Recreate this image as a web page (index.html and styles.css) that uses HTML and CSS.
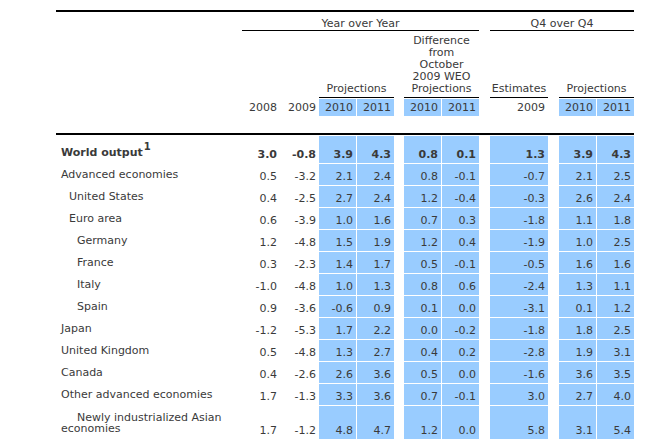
FILE: index.html
```html
<!DOCTYPE html>
<html>
<head>
<meta charset="utf-8">
<title>World Economic Outlook Projections</title>
<link rel="stylesheet" href="styles.css">
</head>
<body>
<div class="table">
  <div class="row h1">
    <div class="hd yoy">Year over Year</div>
    <div class="hd q4">Q4 over Q4</div>
  </div>
  <div class="row h2">
    <div class="hd proj">Projections</div>
    <div class="hd diff">Difference<br>from<br>October<br>2009 WEO<br>Projections</div>
    <div class="hd est">Estimates</div>
    <div class="hd proj2">Projections</div>
  </div>
  <div class="row h3">
    <div></div>
    <div class="y">2008</div>
    <div class="y">2009</div>
    <div class="y b br">2010</div>
    <div class="y b">2011</div>
    <div></div>
    <div class="y b br">2010</div>
    <div class="y b">2011</div>
    <div></div>
    <div class="y">2009</div>
    <div></div>
    <div class="y b br">2010</div>
    <div class="y b">2011</div>
  </div>
  <div class="rule"></div>

  <div class="row d first bold">
    <div class="lbl">World output<sup>1</sup></div>
    <div class="c">3.0</div><div class="c">-0.8</div>
    <div class="c b br">3.9</div><div class="c b">4.3</div><div></div>
    <div class="c b br">0.8</div><div class="c b">0.1</div><div></div>
    <div class="c b">1.3</div><div></div>
    <div class="c b br">3.9</div><div class="c b">4.3</div>
  </div>
  <div class="row d">
    <div class="lbl">Advanced economies</div>
    <div class="c">0.5</div><div class="c">-3.2</div>
    <div class="c b br">2.1</div><div class="c b">2.4</div><div></div>
    <div class="c b br">0.8</div><div class="c b">-0.1</div><div></div>
    <div class="c b">-0.7</div><div></div>
    <div class="c b br">2.1</div><div class="c b">2.5</div>
  </div>
  <div class="row d">
    <div class="lbl i1">United States</div>
    <div class="c">0.4</div><div class="c">-2.5</div>
    <div class="c b br">2.7</div><div class="c b">2.4</div><div></div>
    <div class="c b br">1.2</div><div class="c b">-0.4</div><div></div>
    <div class="c b">-0.3</div><div></div>
    <div class="c b br">2.6</div><div class="c b">2.4</div>
  </div>
  <div class="row d">
    <div class="lbl i1">Euro area</div>
    <div class="c">0.6</div><div class="c">-3.9</div>
    <div class="c b br">1.0</div><div class="c b">1.6</div><div></div>
    <div class="c b br">0.7</div><div class="c b">0.3</div><div></div>
    <div class="c b">-1.8</div><div></div>
    <div class="c b br">1.1</div><div class="c b">1.8</div>
  </div>
  <div class="row d">
    <div class="lbl i2">Germany</div>
    <div class="c">1.2</div><div class="c">-4.8</div>
    <div class="c b br">1.5</div><div class="c b">1.9</div><div></div>
    <div class="c b br">1.2</div><div class="c b">0.4</div><div></div>
    <div class="c b">-1.9</div><div></div>
    <div class="c b br">1.0</div><div class="c b">2.5</div>
  </div>
  <div class="row d">
    <div class="lbl i2">France</div>
    <div class="c">0.3</div><div class="c">-2.3</div>
    <div class="c b br">1.4</div><div class="c b">1.7</div><div></div>
    <div class="c b br">0.5</div><div class="c b">-0.1</div><div></div>
    <div class="c b">-0.5</div><div></div>
    <div class="c b br">1.6</div><div class="c b">1.6</div>
  </div>
  <div class="row d">
    <div class="lbl i2">Italy</div>
    <div class="c">-1.0</div><div class="c">-4.8</div>
    <div class="c b br">1.0</div><div class="c b">1.3</div><div></div>
    <div class="c b br">0.8</div><div class="c b">0.6</div><div></div>
    <div class="c b">-2.4</div><div></div>
    <div class="c b br">1.3</div><div class="c b">1.1</div>
  </div>
  <div class="row d">
    <div class="lbl i2">Spain</div>
    <div class="c">0.9</div><div class="c">-3.6</div>
    <div class="c b br">-0.6</div><div class="c b">0.9</div><div></div>
    <div class="c b br">0.1</div><div class="c b">0.0</div><div></div>
    <div class="c b">-3.1</div><div></div>
    <div class="c b br">0.1</div><div class="c b">1.2</div>
  </div>
  <div class="row d">
    <div class="lbl">Japan</div>
    <div class="c">-1.2</div><div class="c">-5.3</div>
    <div class="c b br">1.7</div><div class="c b">2.2</div><div></div>
    <div class="c b br">0.0</div><div class="c b">-0.2</div><div></div>
    <div class="c b">-1.8</div><div></div>
    <div class="c b br">1.8</div><div class="c b">2.5</div>
  </div>
  <div class="row d">
    <div class="lbl">United Kingdom</div>
    <div class="c">0.5</div><div class="c">-4.8</div>
    <div class="c b br">1.3</div><div class="c b">2.7</div><div></div>
    <div class="c b br">0.4</div><div class="c b">0.2</div><div></div>
    <div class="c b">-2.8</div><div></div>
    <div class="c b br">1.9</div><div class="c b">3.1</div>
  </div>
  <div class="row d">
    <div class="lbl">Canada</div>
    <div class="c">0.4</div><div class="c">-2.6</div>
    <div class="c b br">2.6</div><div class="c b">3.6</div><div></div>
    <div class="c b br">0.5</div><div class="c b">0.0</div><div></div>
    <div class="c b">-1.6</div><div></div>
    <div class="c b br">3.6</div><div class="c b">3.5</div>
  </div>
  <div class="row d">
    <div class="lbl">Other advanced economies</div>
    <div class="c">1.7</div><div class="c">-1.3</div>
    <div class="c b br">3.3</div><div class="c b">3.6</div><div></div>
    <div class="c b br">0.7</div><div class="c b">-0.1</div><div></div>
    <div class="c b">3.0</div><div></div>
    <div class="c b br">2.7</div><div class="c b">4.0</div>
  </div>
  <div class="row d tall">
    <div class="lbl hang">Newly industrialized Asian economies</div>
    <div class="c">1.7</div><div class="c">-1.2</div>
    <div class="c b br">4.8</div><div class="c b">4.7</div><div></div>
    <div class="c b br">1.2</div><div class="c b">0.0</div><div></div>
    <div class="c b">5.8</div><div></div>
    <div class="c b br">3.1</div><div class="c b">5.4</div>
  </div>
</div>
</body>
</html>
```

FILE: styles.css
```css
html, body {
  margin: 0;
  padding: 0;
  background: #ffffff;
}

body {
  font-family: "DejaVu Sans", Verdana, sans-serif;
  font-size: 11px;
  color: #3a3a3a;
}

.table {
  width: 578px;
  margin: 10px 0 0 56px;
  border-top: 2px solid #000000;
}

.row {
  display: grid;
  grid-template-columns: 186px 38px 39px 38px 37px 10px 38px 37px 11px 58px 11px 38px 37px;
}

.row > div {
  box-sizing: border-box;
}

.h1 .hd {
  text-align: center;
  line-height: 13px;
  padding: 5px 0 0;
  border-bottom: 1px solid #000000;
}
.yoy { grid-column: 2 / 9; }
.q4 { grid-column: 10 / 14; }

.h2 {
  min-height: 67px;
}
.h2 .hd {
  align-self: end;
  text-align: center;
  line-height: 12px;
  padding: 0 0 2px;
  border-bottom: 1px solid #000000;
}
.h2 .proj { grid-column: 4 / 6; }
.h2 .diff { grid-column: 7 / 9; padding-top: 4px; }
.h2 .est { grid-column: 10 / 11; }
.h2 .proj2 { grid-column: 12 / 14; }

.h3 {
  padding-top: 1px;
}
.h3 .y {
  text-align: right;
  line-height: 13px;
  padding: 2px 3px 2px 0;
}

.rule {
  margin-top: 17px;
  border-top: 2px solid #000000;
  height: 1px;
}

.d {
  grid-auto-rows: minmax(22px, auto);
}
.d.first {
  grid-auto-rows: 28px;
}
.d.tall {
  grid-auto-rows: 34px;
}

.d > div {
  border-bottom: 1px solid #ffffff;
}

.c {
  display: flex;
  align-items: flex-end;
  justify-content: flex-end;
  line-height: 11px;
  padding: 0 3px 3px 0;
}

.b {
  background: #99ccff;
}
.br {
  border-right: 1px solid #ffffff;
}

.lbl {
  align-self: end;
  line-height: 11px;
  padding: 5px 0 5px 5px;
}
.lbl.i1 { padding-left: 13px; }
.lbl.i2 { padding-left: 21px; }
.lbl.hang { text-indent: 16px; }

.bold {
  font-weight: bold;
}

.bold sup {
  font-size: 10px;
  line-height: 0;
  vertical-align: baseline;
  position: relative;
  top: -6px;
  margin-left: 1px;
}
```
